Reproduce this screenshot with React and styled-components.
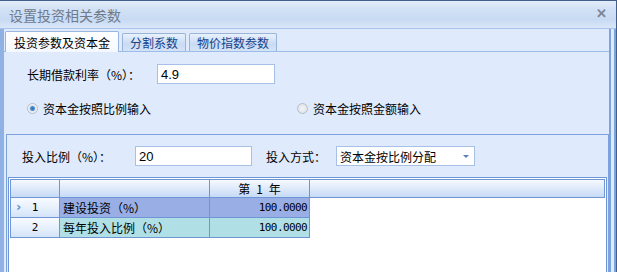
import React from "react";
import styled, { createGlobalStyle } from "styled-components";

const Global = createGlobalStyle`
  html, body { margin: 0; padding: 0; background: #ffffff; }
  body { font-family: "Noto Sans CJK SC", "Liberation Sans", sans-serif; font-size: 12px; color: #000; }
`;

const Window = styled.div`
  width: 617px;
  height: 272px;
  box-sizing: border-box;
  border-top: 1px solid #3f5f8c;
  border-right: 1px solid #3f5f8c;
  overflow: hidden;
  display: flex;
  flex-direction: column;
  background: #dfeafc;
`;

const TitleBar = styled.div`
  height: 27px;
  flex: none;
  display: flex;
  align-items: center;
  justify-content: space-between;
  padding: 0 9px 0 9px;
  background: linear-gradient(#e3ecf9 0%, #d2e1f5 30%, #c8daf3 70%, #dbe7f8 100%);
  border-bottom: 1px solid #a9c4ea;
`;

const Title = styled.span`
  font-size: 14px;
  color: #6f7b8c;
`;

const Close = styled.span`
  font-family: "Liberation Sans", sans-serif;
  font-size: 13px;
  font-weight: bold;
  color: #7d8797;
  margin-top: -2px;
`;

const Body = styled.div`
  flex: 1;
  display: flex;
  flex-direction: column;
  border-left: 4px solid #8fb1e3;
  border-right: 7px double #7da3dc;
  background: #dfeafc;
  min-height: 0;
`;

const TabStrip = styled.div`
  height: 22px;
  flex: none;
  display: flex;
  align-items: flex-end;
  gap: 3px;
  padding-left: 1px;
`;

const Tab = styled.div`
  height: ${(p) => (p.$active ? "21px" : "18px")};
  box-sizing: border-box;
  padding: 0 ${(p) => (p.$active ? "8px" : "7px")};
  display: flex;
  align-items: center;
  border: 1px solid ${(p) => (p.$active ? "#99b6e0" : "#9ab4d8")};
  border-bottom: none;
  border-radius: 2px 2px 0 0;
  color: ${(p) => (p.$active ? "#000" : "#15428b")};
  background: ${(p) =>
    p.$active
      ? "linear-gradient(#ffffff, #f4f8fe)"
      : "linear-gradient(#e9f1fc, #c9dbf4 60%, #d5e3f7)"};
  margin-bottom: ${(p) => (p.$active ? "-1px" : "0")};
  position: relative;
  z-index: ${(p) => (p.$active ? 1 : 0)};
`;

const Page = styled.div`
  flex: 1;
  display: flex;
  flex-direction: column;
  border-top: 1px solid #9dbde9;
  min-height: 0;
`;

const TopArea = styled.div`
  height: 82px;
  flex: none;
  display: flex;
  flex-direction: column;
  padding-left: 23px;
`;

const FieldRow = styled.div`
  display: flex;
  align-items: center;
  height: 20px;
  margin-top: ${(p) => p.$mt || 0}px;
`;

const Label = styled.span`
  width: ${(p) => p.$w}px;
  margin-left: ${(p) => p.$ml || 0}px;
  flex: none;
  white-space: nowrap;
`;

const Input = styled.div`
  width: ${(p) => p.$w}px;
  height: 20px;
  box-sizing: border-box;
  flex: none;
  border: 1px solid #a6c0e6;
  background: #fff;
  padding-left: 3px;
  display: flex;
  align-items: center;
  font-family: "Liberation Sans", sans-serif;
  font-size: 13px;
`;

const RadioItem = styled.div`
  display: flex;
  align-items: center;
  gap: 5px;
  width: ${(p) => p.$w}px;
  flex: none;
`;

const RadioDot = styled.span`
  width: 11px;
  height: 11px;
  border-radius: 50%;
  box-sizing: border-box;
  border: 1px solid #b6bec8;
  background: radial-gradient(circle at 50% 50%, ${(p) =>
    p.$checked ? "#2d6fb5 0, #4f8fd0 2px, #dfe6ee 3px, #f7f9fb 5px" : "#f2f4f6 0, #dfe3e8 5px"});
`;

const Group = styled.div`
  flex: 1;
  margin: 0 0 0 2px;
  border: 1px solid #7da3dc;
  border-bottom: none;
  display: flex;
  flex-direction: column;
  min-height: 0;
`;

const GroupForm = styled.div`
  height: 42px;
  flex: none;
  display: flex;
  align-items: center;
  padding-left: 15px;
`;

const Combo = styled(Input)`
  justify-content: space-between;
  padding-right: 5px;
  font-family: "Noto Sans CJK SC", sans-serif;
  font-size: 12px;
`;

const Arrow = styled.span`
  width: 0;
  height: 0;
  border-left: 3px solid transparent;
  border-right: 3px solid transparent;
  border-top: 3px solid #5a7fb5;
`;

const GridOuter = styled.div`
  flex: 1;
  margin: 0 1px 0 1px;
  border: 1px solid #6e95d6;
  border-bottom: none;
  padding: 1px 1px 0 1px;
  background: #fff;
  min-height: 0;
`;

const GridTable = styled.div`
  display: grid;
  grid-template-columns: 49px 150px 100px 1fr;
  grid-template-rows: 18px 20px 20px;
  border-left: 1px solid #6e95d6;
  border-top: 1px solid #6e95d6;
`;

const HeadCell = styled.div`
  background: linear-gradient(#f6f9fe, #dce8fa 55%, #c6daf6);
  border-right: 1px solid #6e95d6;
  border-bottom: 1px solid #6e95d6;
  display: flex;
  align-items: center;
  justify-content: center;
  white-space: pre;
`;

const RowHead = styled(HeadCell)`
  position: relative;
  background: linear-gradient(#f8fbff, #e4eefc 60%, #d3e3f8);
  font-family: "DejaVu Sans Mono", monospace;
  font-size: 11px;
`;

const Marker = styled.span`
  position: absolute;
  left: 5px;
  top: 3px;
  color: #5f8fd6;
  font-weight: bold;
  font-family: "DejaVu Sans", sans-serif;
  font-size: 13px;
  line-height: 11px;
`;

const Cell = styled.div`
  background: ${(p) => p.$bg};
  border-right: 1px solid #6e95d6;
  border-bottom: 1px solid #6e95d6;
  display: flex;
  align-items: center;
  justify-content: ${(p) => (p.$right ? "flex-end" : "flex-start")};
  padding: 0 2px 0 3px;
  font-family: ${(p) => (p.$right ? '"DejaVu Sans Mono", monospace' : '"Noto Sans CJK SC", sans-serif')};
  font-size: ${(p) => (p.$right ? "11px" : "12px")};
  letter-spacing: ${(p) => (p.$right ? "-0.6px" : "0")};
  white-space: nowrap;
`;

const Empty = styled.div``;

const rows = [
  { n: 1, name: "建设投资（%）", v: "100.0000", bg: "#9aaee6", current: true },
  { n: 2, name: "每年投入比例（%）", v: "100.0000", bg: "#b0e0e6" },
];

export default function App() {
  return (
    <>
      <Global />
      <Window>
        <TitleBar>
          <Title>设置投资相关参数</Title>
          <Close>✕</Close>
        </TitleBar>
        <Body>
          <TabStrip>
            <Tab $active>投资参数及资本金</Tab>
            <Tab>分割系数</Tab>
            <Tab>物价指数参数</Tab>
          </TabStrip>
          <Page>
            <TopArea>
              <FieldRow $mt={12}>
                <Label $w={130}>长期借款利率（%）：</Label>
                <Input $w={118}>4.9</Input>
              </FieldRow>
              <FieldRow $mt={14}>
                <RadioItem $w={270}>
                  <RadioDot $checked />
                  资本金按照比例输入
                </RadioItem>
                <RadioItem $w={200}>
                  <RadioDot />
                  资本金按照金额输入
                </RadioItem>
              </FieldRow>
            </TopArea>
            <Group>
              <GroupForm>
                <Label $w={113}>投入比例（%）：</Label>
                <Input $w={117}>20</Input>
                <Label $w={70} $ml={14}>投入方式：</Label>
                <Combo $w={139}>
                  资本金按比例分配
                  <Arrow />
                </Combo>
              </GroupForm>
              <GridOuter>
                <GridTable>
                  <HeadCell />
                  <HeadCell />
                  <HeadCell>{"第\u20021\u2002年"}</HeadCell>
                  <HeadCell />
                  {rows.map((r) => (
                    <React.Fragment key={r.n}>
                      <RowHead>
                        {r.current && <Marker>›</Marker>}
                        {r.n}
                      </RowHead>
                      <Cell $bg={r.bg}>{r.name}</Cell>
                      <Cell $bg={r.bg} $right>
                        {r.v}
                      </Cell>
                      <Empty />
                    </React.Fragment>
                  ))}
                </GridTable>
              </GridOuter>
            </Group>
          </Page>
        </Body>
      </Window>
    </>
  );
}
